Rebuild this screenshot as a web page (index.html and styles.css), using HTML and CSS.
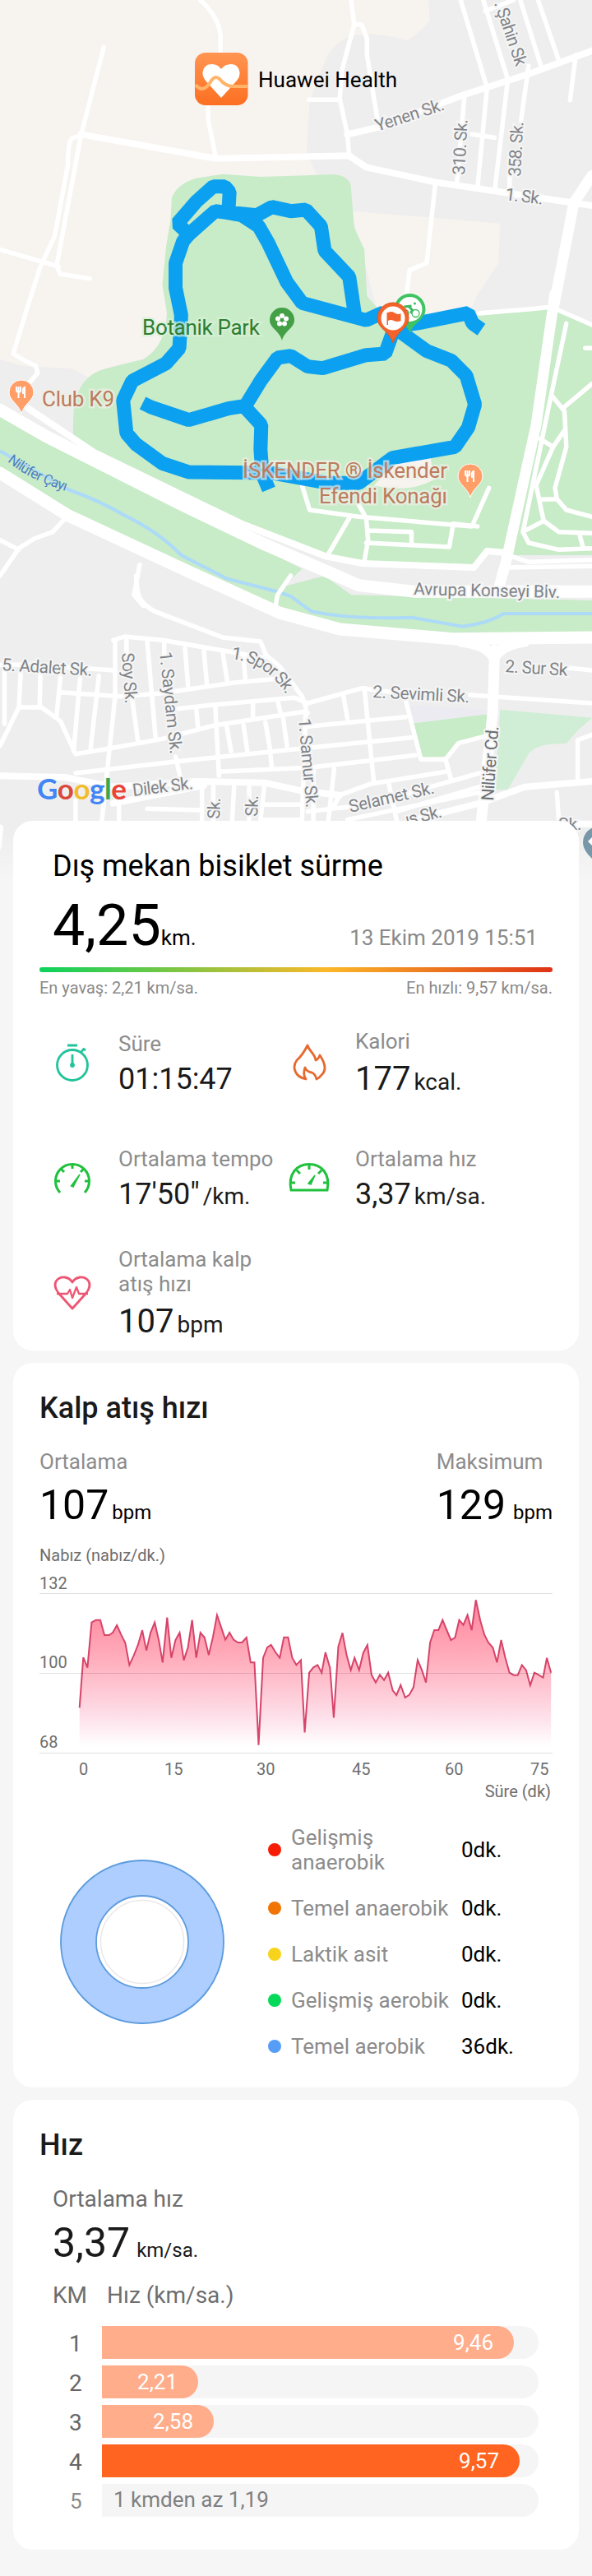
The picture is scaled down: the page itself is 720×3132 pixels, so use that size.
FILE: index.html
```html
<!DOCTYPE html>
<html lang="tr">
<head>
	<meta charset="UTF-8">
	<meta name="viewport" content="width=device-width, initial-scale=1.0">
	<title>Huawei Health</title>
	<link rel="stylesheet" href="styles.css">
</head>
<body>
	<!-- map -->
	<div class="map">
		<svg class="ground" viewBox="0 0 1568 3240" preserveAspectRatio="none">
			<path class="sand" d="M0 0H1135L1138 75Q1115 115 1080 148Q1000 115 930 130Q880 160 862 220L820 370L812 560L840 640L900 1000L440 1260L380 1310Q260 1340 240 1380L190 1345L60 1335L0 1310Z"/>
			<path class="sand" d="M930 770L1325 815L1320 960L1260 1085Q1255 1130 1220 1145L1000 1140Z"/>
			<path class="green" d="M590 635L690 645Q800 640 880 636Q930 640 930 690L938 830L965 910L972 1080L1010 1140L1270 1152L1465 1125L1568 1180V2025H1340L1290 2010L1255 2075L960 2050L865 2030L640 1910L250 1650L193 1595L195 1500Q205 1370 280 1345L380 1310Q440 1260 442 1140L430 1040L440 900L452 800L455 720Q470 670 520 650Z"/>
			<path class="green" d="M0 1500L480 1850L800 2075L750 2140L860 2100L930 2170L1568 2190V2305L1220 2320L900 2285L740 2220L500 2080L180 1880L0 1725Z"/>
			<path class="green" d="M1095 2638L1290 2605L1290 2690L1210 2705L1180 2760L1115 2762Z"/>
			<path class="green soft" d="M1325 2588L1568 2618L1530 2665L1500 2712Q1420 2710 1400 2750L1345 2880H1310Z"/>
			<path class="lilac" d="M1080 2570L1290 2590V2605L1095 2638Z"/>
			<path class="sand" d="M1050 1690L1140 1665L1150 1750Q1080 1800 990 1770Z"/>
			<path class="river" d="M0 1645L180 1785Q270 1830 330 1880Q420 1940 480 2025L600 2110L740 2160L770 2175L825 2230Q930 2260 1090 2252L1225 2285Q1290 2275 1335 2238L1568 2238"/>

			<!-- small streets -->
			<g class="street">
				<path d="M275 172L215 490L150 970L160 1000L238 1016M0 910L155 972M530 0Q580 60 584 130V190M550 380L552 440L572 578M220 490L190 505Q180 520 180 600L145 860L105 980L75 1110L35 1290L65 1315L95 1335L100 1360L75 1400"/>
				<path d="M930 0L938 90L905 260L900 360L920 490L925 568M938 90H958L972 140V200L1000 440M818 364H900M1220 0L1290 320L1265 680M1280 0L1345 290L1310 700M1378 0L1435 250M1425 0L1480 220M1400 240L1380 440M1525 200L1510 365M1285 40L1360 0M1230 350L1210 670M1250 490L1310 502M1350 700V640"/>
				<path d="M1153 670L1130 960L1085 985L1075 1100M1270 1142L1400 1128L1460 1120L1568 1185"/>
			</g>
			<g class="street mid">
				<path d="M215 490L570 578L925 568L970 610L1155 665L1568 750M920 490L1000 465L1230 345L1400 270L1568 185"/>
			</g>
			<!-- lanes inside the park -->
			<g class="street" transform="translate(0 1080)">
				<path d="M800 690L820 780L950 805L1250 840L1295 700M950 760L970 810L975 890L965 965M925 810L870 940M975 855L1090 860V900M970 900L1190 915L1200 835M1200 830L1265 840"/>
				<path d="M1500 100L1460 360L1385 860L1400 900L1480 925L1568 920M1460 360L1495 420L1500 550L1470 700L1475 740L1500 780L1568 805M1490 410L1568 320M1430 520L1465 550L1495 490M1465 550L1420 690L1440 820L1480 860L1568 865M1385 860L1440 820M1430 742L1475 740M1535 870L1545 920M1568 190H1550"/>
				<path d="M1335 940L1400 970L1568 962M1340 990L1568 985M180 800L140 860L90 885L50 920L0 1020M0 890L50 925M370 980L355 1090L380 1130"/>
				<path class="mid" d="M75 410L250 570L640 830L865 950L960 975L1255 990L1290 930L1335 935"/>
			</g>
			<g class="street wide">
				<path d="M0 1495L120 1590L480 1840L700 1985L950 2135L1100 2158H1568"/>
				<path d="M0 1725L180 1880L500 2085L740 2235L900 2295L1200 2330L1568 2325"/>
				<path class="avenue" d="M1470 1070L1420 1550L1340 2050L1320 2150M1310 2370L1305 2600L1275 2990M1220 2340Q1290 2350 1308 2400Q1330 2350 1390 2340M1568 640L1520 740L1465 1130"/>
			</g>
			<!-- streets of the south quarter -->
			<g class="street" transform="translate(0 2100)">
				<path d="M770 0L735 70L730 110M360 0L365 60Q370 100 410 130L590 225L690 240L705 290L740 330L800 440L810 480L800 890"/>
				<path d="M0 325L100 325L300 345M305 235L305 440L270 890M300 235L330 222L430 235L620 280L700 300M335 230V290M390 240L412 590M435 240V290M490 265L498 400M540 275L548 395M590 280L602 385M645 300L650 380M160 425L320 440L420 430L620 390L740 375M12 350V540M55 350L50 480M107 360L105 475M160 370L150 510M212 375L195 640M262 365L240 630M350 450L365 600M0 620L50 480H110L160 530L200 650L290 630L430 595L570 545L810 495L815 500M470 485L570 470L780 445L815 465L960 410L1040 425"/>
				<path d="M520 490L525 560M570 470L580 730M670 460V520M735 455L745 510M600 545L612 640M645 545L655 640M703 535L715 630L720 705M750 520L760 620M200 720L450 680L800 630L1090 590M580 715L820 700L1100 655M815 550L1075 515M910 440L920 520M965 410L990 750M1070 430L1115 670L1180 670L1215 610L1300 580M1180 670L1195 745M465 660L480 750M885 705L870 890M815 860L880 850L900 800L980 760L1180 715M1050 860L1270 770M870 850L960 840L1270 720M920 890L1270 790"/>
				<path d="M390 850L530 855M200 820V890M315 820V890M535 750V890M620 770L615 890M700 770L690 890M565 750V890M660 770V890M700 835H800M690 890H800M1030 760L1050 890M830 700L830 890M1245 435L1568 465M1500 335L1568 345M1568 580L1530 600V750M1475 790L1480 890"/>
				<path class="mid" d="M0 730L170 735L300 770L520 750L700 755L800 785L900 800M300 830L540 765M1100 890L1270 830L1390 770L1568 750M0 920L-5 990M1500 905L1568 905"/>
			</g>

			<!-- ride track -->
			<g class="track">
				<path d="M1275 1202L1252 1180L1240 1142L1110 1178L1045 1190L1015 1140L970 1168L800 1105L760 1030L710 885L685 825L640 785L600 775L570 770L500 855L470 815L520 735L565 680H595L608 700L605 775L680 785L720 755L770 770L810 765L850 825L860 915L925 1010L940 1150"/>
				<path d="M500 855L485 880L465 960V1050L480 1150L475 1270L440 1325L350 1390L326 1460L335 1580L360 1620L430 1690L500 1722L720 1725L870 1762H950L1040 1670L1205 1630L1240 1560L1258 1475L1235 1370L1195 1315L1130 1280L1070 1220L1045 1195L1020 1290L970 1295L855 1343L815 1337L770 1298L735 1305L690 1390L650 1480L605 1490L500 1532L400 1485L378 1470M645 1480L692 1550L690 1640L695 1730L712 1785"/>
			</g>
		</svg>

		<svg class="labels" viewBox="0 0 720 1080">
			<defs>
				<linearGradient id="brand" x1="0" y1="0" x2="0" y2="1">
					<stop offset="0" stop-color="#ff9551"/>
					<stop offset="1" stop-color="#fc6f22"/>
				</linearGradient>
				<path id="spor" d="M281 801Q325 806 349 846"/>
				<path id="cayi" d="M9 561Q35 583 80 597"/>
			</defs>
			<g class="label">
				<text transform="translate(459 160) rotate(-18)" textLength="87">Yenen Sk.</text>
				<text transform="translate(565 213) rotate(-87)" textLength="68">310. Sk.</text>
				<text transform="translate(633 215) rotate(-87)" textLength="67">358. Sk.</text>
				<text transform="translate(601 4) rotate(71)" textLength="82">. Şahin Sk</text>
				<text transform="translate(614 243) rotate(7)" textLength="46">1. Sk.</text>
				<text transform="translate(503 723) rotate(1.3)" textLength="178">Avrupa Konseyi Blv.</text>
				<text transform="translate(2 815) rotate(3.5)" textLength="110">5. Adalet Sk.</text>
				<text transform="translate(148 794) rotate(86)" textLength="62">Soy Sk.</text>
				<text transform="translate(194 793) rotate(84)" textLength="125">1. Saydam Sk.</text>
				<text><textPath href="#spor" textLength="83">1. Spor Sk.</textPath></text>
				<text transform="translate(363 874) rotate(85)" textLength="109">1. Samur Sk.</text>
				<text transform="translate(614 817) rotate(3.5)" textLength="76">2. Sur Sk</text>
				<text transform="translate(453 848) rotate(3)" textLength="118">2. Sevimli Sk.</text>
				<text transform="translate(600 974) rotate(-86)" textLength="91" class="dark">Nilüfer Cd.</text>
				<text transform="translate(162 968) rotate(-7)" textLength="74">Dilek Sk.</text>
				<text transform="translate(426 988) rotate(-13)" textLength="106">Selamet Sk.</text>
				<text transform="translate(267 996) rotate(-88)" textLength="26">Sk.</text>
				<text transform="translate(313 993) rotate(-88)" textLength="26">Sk.</text>
				<text transform="translate(495 1004) rotate(-14)" textLength="45">ış Sk.</text>
				<text x="679" y="1009">Sk.</text>
				<text class="water"><textPath href="#cayi" textLength="80">Nilüfer Çayı</textPath></text>
			</g>
			<g class="place">
				<text class="park" x="173" y="407" textLength="143">Botanik Park</text>
				<text x="51" y="494" textLength="88">Club K9</text>
				<text x="295" y="581" textLength="249">İSKENDER ® İskender</text>
				<text x="388" y="612" textLength="156">Efendi Konağı</text>
			</g>

			<!-- pins -->
			<g transform="translate(343 389)">
				<path fill="#43a047" d="M0 25C-3 13-15 10-15 0A15 15 0 0 1 15 0C15 10 3 13 0 25Z"/>
				<g fill="#fff"><circle cy="-5" r="3"/><circle cx="5" cy="-1.500" r="3"/><circle cx="3" cy="4.500" r="3"/><circle cx="-3" cy="4.500" r="3"/><circle cx="-5" cy="-1.500" r="3"/></g>
				<circle r="1.600" fill="#43a047"/>
			</g>
			<g id="food" transform="translate(26 477)">
				<path fill="#ff9e67" stroke="#fff" d="M0 26C-3 14-15 10-15 0A15 15 0 0 1 15 0C15 10 3 14 0 26Z"/>
				<path fill="none" stroke="#fff" stroke-width="2" d="M-6-7V-3Q-6 0-3.500 0T-1-3V-7M-3.500-7V7M4 7V-6Q1-5 2 1H4"/>
			</g>
			<use href="#food" x="546" y="102"/>
			<g transform="translate(498.500 377)">
				<path fill="#3fc463" d="M0 28C-4 15-19 12-19-1A19 19 0 0 1 19-1C19 12 4 15 0 28Z"/>
				<circle cy="-1" r="15" fill="#fff"/>
				<g fill="none" stroke="#3dba5f" stroke-width="1.300">
					<circle cx="-6" cy="4" r="4.500"/>
					<circle cx="7" cy="4" r="4.500"/>
					<path d="M-7-4L2-5M-2-5L3 0L1 4" stroke-width="3"/>
				</g>
				<circle cx="6" cy="-8" r="1.500" fill="#3dba5f"/>
			</g>
			<g transform="translate(478 387)">
				<path fill="#f4632b" stroke="#e0561f" d="M0 30C-4 16-19 12-19 0A19 19 0 0 1 19 0C19 12 4 16 0 30Z"/>
				<circle r="14.500" fill="#fff"/>
				<path fill="#f4632b" d="M-7.500-7H-6V8H-7.500ZM-6-7Q-2-9 2-6.500T9.500-6V3Q5 5 1 3T-6 3Z"/>
			</g>
			<path fill="#7897a9" d="M728 1056C724 1044 709 1038 709 1024A19 19 0 0 1 747 1024Z"/>
			<path fill="#fff" d="M715 1023L720 1018V1028Z"/>

			<!-- app badge -->
			<rect x="237" y="64" width="64.500" height="64" rx="13" fill="url(#brand)"/>
			<path fill="#fff" d="M269 119L250 98Q245 91 247 86Q249 78 258 78Q265 78 269 84Q273 78 281 78Q289 78 291 86Q293 92 288 98Z"/>
			<path fill="none" stroke="#ffb469" stroke-width="4" d="M238 103Q243 110 249 107Q253 105 257 98Q262 91 267 96Q274 105 284 105H301"/>
			<text class="app" x="314" y="106" textLength="169">Huawei Health</text>
			<text class="google" x="45" y="972" textLength="109"><tspan fill="#4285f4">G</tspan><tspan fill="#d94a3d">o</tspan><tspan fill="#f2bd2c">o</tspan><tspan fill="#4285f4">g</tspan><tspan fill="#34a853">l</tspan><tspan fill="#ea4335">e</tspan></text>
		</svg>
	</div>

	<!-- summary -->
	<div class="card summary">
		<h1>Dış mekan bisiklet sürme</h1>
		<div class="distance">
			<p><b>4,25</b>km.</p>
			<span>13 Ekim 2019 15:51</span>
		</div>
		<div class="pace-bar"></div>
		<div class="pace-text">
			<span>En yavaş: 2,21 km/sa.</span>
			<span>En hızlı: 9,57 km/sa.</span>
		</div>
		<ul class="stats">
			<li>
				<svg viewBox="0 0 48 48" fill="none" stroke="#20c39a" stroke-width="2.800">
					<circle cx="24" cy="26" r="18.500"/>
					<path d="M18 2H30M34 11L38 6M37 6L40 8M24 13V26"/>
					<circle cx="24" cy="26" r="1.500"/>
				</svg>
				<div><span>Süre</span><p>01:15:47</p></div>
			</li>
			<li>
				<svg viewBox="0 0 48 48" fill="none" stroke="#e6692f" stroke-width="2.800" stroke-linejoin="round">
					<path d="M22 2C24 9 31 12 32 20Q35 19 37 14C43 23 46 32 39 38Q37 41 33 43Q31 36 27 35Q21 34 19 29Q16 38 20 43C6 40 3 28 9 20Q16 14 22 2Z"/>
				</svg>
				<div><span>Kalori</span><p class="big">177<small>kcal.</small></p></div>
			</li>
			<li>
				<svg viewBox="0 0 48 48" fill="none" stroke="#1fc13d" stroke-width="3">
					<path d="M9 41A20.500 20.500 0 1 1 39 41M24 6V12M10.500 12.500L14 16M37.500 12.500L34 16M3 27H9M39 27H45"/>
					<path d="M33 19L25 34L22.500 33Z" fill="#1fc13d" stroke-width="1.500"/>
				</svg>
				<div><span>Ortalama tempo</span><p>17'50"<small>/km.</small></p></div>
			</li>
			<li>
				<svg viewBox="0 0 48 48" fill="none" stroke="#1fc13d" stroke-width="3">
					<path d="M2 38C-2 18 9 6.500 24 6.500S50 18 46 38ZM24 7V13M9 14L13 18M39 14L35 18M1 29H7M41 29H47"/>
					<path d="M31 20L26 31L23 30Z" fill="#1fc13d" stroke-width="1.500"/>
				</svg>
				<div><span>Ortalama hız</span><p>3,37<small>km/sa.</small></p></div>
			</li>
			<li>
				<svg viewBox="0 0 48 48" fill="none" stroke="#ee5573" stroke-width="2.800" stroke-linejoin="round">
					<path d="M24 42L7 23Q1 15 4 9Q8 3 15 4Q21 5 24 10Q27 5 33 4Q40 3 44 9Q47 15 41 23Z"/>
					<path d="M5 24H18L21 19L24 29L29 16L32 24H43" stroke-width="2.300"/>
				</svg>
				<div><span>Ortalama kalp<br>atış hızı</span><p class="big">107<small>bpm</small></p></div>
			</li>
		</ul>
	</div>

	<!-- heart rate -->
	<div class="card heart">
		<h2>Kalp atış hızı</h2>
		<div class="rates">
			<div><span>Ortalama</span><p>107<small>bpm</small></p></div>
			<div><span>Maksimum</span><p>129<small class="far">bpm</small></p></div>
		</div>
		<p class="axis-title">Nabız (nabız/dk.)</p>
		<div class="chart">
			<svg viewBox="105 52 1358 582" preserveAspectRatio="none">
				<defs>
					<linearGradient id="pulse" gradientUnits="userSpaceOnUse" x1="0" y1="76" x2="0" y2="610">
						<stop offset="0" stop-color="#ff8299"/>
						<stop offset=".45" stop-color="#ffb3c1"/>
						<stop offset=".8" stop-color="#fde0ea"/>
						<stop offset="1" stop-color="#fff"/>
					</linearGradient>
				</defs>
				<path id="area" fill="url(#pulse)"/>
				<path id="line"/>
			</svg>
			<div class="tick first">132</div>
			<div class="tick">100</div>
			<div class="tick">68</div>
		</div>
		<div class="minutes"><span>0</span><span>15</span><span>30</span><span>45</span><span>60</span><span>75</span></div>
		<p class="axis-end">Süre (dk)</p>
		<div class="zones">
			<svg viewBox="0 0 204 204">
				<circle cx="102" cy="102" r="78" fill="none" stroke="#adceff" stroke-width="43"/>
				<circle cx="102" cy="102" r="99" fill="none" stroke="#5c9bdd" stroke-width="1.800"/>
				<circle cx="102" cy="102" r="56" fill="#fff" stroke="#5c9bdd" stroke-width="1.800"/>
				<circle cx="102" cy="102" r="50.500" fill="none" stroke="#ece8e8" stroke-width="1.600"/>
			</svg>
			<ul>
				<li><i class="red"></i><span>Gelişmiş<br>anaerobik</span><b>0dk.</b></li>
				<li><i class="orange"></i><span>Temel anaerobik</span><b>0dk.</b></li>
				<li><i class="yellow"></i><span>Laktik asit</span><b>0dk.</b></li>
				<li><i class="lime"></i><span>Gelişmiş aerobik</span><b>0dk.</b></li>
				<li><i class="blue"></i><span>Temel aerobik</span><b>36dk.</b></li>
			</ul>
		</div>
	</div>

	<!-- speed -->
	<div class="card speed">
		<h2>Hız</h2>
		<div class="average">
			<span>Ortalama hız</span>
			<p>3,37<small>km/sa.</small></p>
		</div>
		<div class="head"><span>KM</span><span>Hız (km/sa.)</span></div>
		<ul class="laps">
			<li><span>1</span><div class="lap"><div style="width: 501px">9,46</div></div></li>
			<li><span>2</span><div class="lap"><div style="width: 117px">2,21</div></div></li>
			<li><span>3</span><div class="lap"><div style="width: 136px">2,58</div></div></li>
			<li><span>4</span><div class="lap"><div class="best" style="width: 508px">9,57</div></div></li>
			<li class="rest"><span>5</span><div class="lap">1 kmden az 1,19</div></li>
		</ul>
	</div>

	<script type="text/javascript">
	// pulse curve, x y pairs
	var points = '211,470 221,286 232,324 243,159 254,150 266,150 277,205 289,205 299,196 310,169 321,203 332,233 343,314 355,278 366,240 377,187 388,261 399,196 410,159 421,225 431,305 443,141 454,288 465,223 476,196 487,297 498,250 509,150 520,288 531,196 542,214 553,278 564,213 575,132 586,177 597,222 608,196 619,222 630,232 641,232 653,214 664,305 674,305 685,606 697,288 708,250 718,241 730,268 741,288 752,213 763,213 774,288 785,314 797,296 807,560 819,342 830,323 841,314 852,342 862,268 874,325 884,506 896,247 907,197 918,278 929,333 939,288 951,333 962,270 973,241 984,350 995,378 1006,350 1017,369 1028,342 1040,407 1050,424 1061,387 1073,433 1084,423 1095,395 1106,296 1117,332 1128,378 1139,232 1150,187 1161,187 1172,150 1183,187 1194,223 1205,214 1216,150 1227,168 1238,132 1249,187 1260,77 1272,153 1283,205 1293,232 1305,251 1316,305 1327,223 1338,288 1349,342 1360,351 1371,351 1382,314 1393,333 1404,388 1415,342 1427,351 1438,360 1448,288 1459,342';

	document.getElementById('line').setAttribute('d', 'M' + points);
	document.getElementById('area').setAttribute('d', 'M211,620 ' + points + ' 1459,620Z');
	</script>
</body>
</html>
```

FILE: styles.css
```css
* {
	margin: 0;
	padding: 0;
	box-sizing: border-box;
}
body {
	width: 720px;
	height: 3132px;
	background-color: #f6f6f6;
	font-family: Roboto, "Noto Sans", sans-serif;
	color: #000;
	overflow: hidden;
}
ul {
	list-style-type: none;
}
b {
	font-weight: 400;
}
small {
	line-height: 1;
}

/* map */
.map {
	position: relative;
	height: 998px;
}
.map svg {
	position: absolute;
	top: 0;
	left: 0;
	width: 720px;
	height: 1080px;
}
.ground {
	background-color: #eee;
	-webkit-mask-image: linear-gradient(#000 94%, transparent 99%);
	mask-image: linear-gradient(#000 94%, transparent 99%);
}
.sand {
	fill: #f7f3ef;
}
.green {
	fill: #c8ebc8;
}
.soft {
	fill: #d0eed5;
}
.lilac {
	fill: #ebebf1;
}
.river {
	fill: none;
	stroke: #acdaf8;
	stroke-width: 4px;
	vector-effect: non-scaling-stroke;
}
.street path {
	fill: none;
	stroke: #fff;
	stroke-width: 5.5px;
	stroke-linejoin: round;
	stroke-linecap: round;
	vector-effect: non-scaling-stroke;
}
.mid path, .street .mid {
	stroke-width: 8px;
}
.wide path {
	stroke-width: 15px;
}
.wide .avenue {
	stroke-width: 13px;
}
.track path {
	fill: none;
	stroke: #0ba0f0;
	stroke-width: 17px;
	stroke-linejoin: bevel;
	vector-effect: non-scaling-stroke;
}
.label text {
	font-size: 21px;
	fill: #808387;
	stroke: #f5f5f5;
	stroke-width: 4px;
	paint-order: stroke;
}
.label .dark {
	fill: #6c6f73;
}
.label .water {
	font-size: 17px;
	fill: #4d7fc4;
	stroke: #c8ebc8;
	stroke-width: 1px;
}
.place text {
	font-size: 26px;
	fill: #bd7a5c;
	stroke: rgba(240, 240, 232, 0.65);
	stroke-width: 5px;
	paint-order: stroke;
}
.place .park {
	fill: #2f7d32;
	stroke: rgba(215, 242, 215, 0.7);
}
.app {
	font-size: 26px;
}
.google {
	font-family: Lato, Roboto, sans-serif;
	font-size: 35px;
	font-weight: 700;
	stroke: #f4f4f4;
	stroke-width: 2px;
	paint-order: stroke;
}

/* cards */
.card {
	position: relative;
	width: 688px;
	margin: 0 auto 15px;
	padding-top: 34px;
	border-radius: 24px;
	background-color: #fff;
}
h1, h2 {
	font-size: 36px;
	line-height: 42px;
	font-weight: 400;
}
h2 {
	padding-left: 32px;
	font-weight: 500;
	color: #1a1a1a;
}

/* summary */
.summary {
	height: 644px;
}
.summary h1 {
	padding-left: 48px;
}
.distance {
	display: flex;
	justify-content: space-between;
	align-items: baseline;
	height: 80px;
	margin: 11px 50px 0 48px;
	line-height: 80px;
	font-size: 26px;
}
.distance b {
	font-size: 70px;
}
.distance span {
	color: #8a8a8a;
}
.pace-bar {
	height: 6px;
	margin: 11px 32px 0;
	border-radius: 3px;
	background-image: linear-gradient(90deg, #0bd25c, #fbb829 56%, #de3216);
}
.pace-text {
	display: flex;
	justify-content: space-between;
	margin: 7px 32px 10px;
	font-size: 20px;
	line-height: 24px;
	color: #8a8a8a;
}
.stats {
	display: grid;
	grid-template-columns: 288px 288px;
	grid-auto-rows: 140px;
	padding-left: 48px;
}
.stats li {
	display: flex;
	align-items: center;
	white-space: nowrap;
}
.stats svg {
	flex: none;
	width: 48px;
	height: 48px;
	margin-right: 32px;
	overflow: visible;
}
.stats span {
	display: block;
	margin-bottom: 7px;
	font-size: 26px;
	line-height: 30px;
	color: #8c8c8c;
}
.stats p {
	font-size: 36px;
	line-height: 42px;
	color: #1a1a1a;
}
.stats .big {
	font-size: 40px;
	line-height: 47px;
}
.stats small {
	margin-left: 4px;
	font-size: 28px;
}

/* heart rate */
.heart {
	height: 881px;
}
.rates {
	display: flex;
	justify-content: space-between;
	margin: 29px 32px 20px;
}
.rates span {
	display: block;
	margin-bottom: 9px;
	font-size: 26px;
	line-height: 30px;
	color: #8c8c8c;
}
.rates p, .average p {
	font-size: 50px;
	line-height: 58px;
}
.rates small {
	margin-left: 4px;
	font-size: 24px;
}
.rates .far {
	margin-left: 9px;
}
.axis-title, .chart, .minutes, .axis-end {
	margin: 0 32px;
	font-size: 20px;
	line-height: 24px;
	color: #6e6e6e;
}
.axis-title {
	margin-bottom: 10px;
}
.chart {
	position: relative;
}
.chart svg {
	position: absolute;
	top: 24px;
	left: 0;
	width: 624px;
	height: 194px;
}
#line {
	fill: none;
	stroke: #d6446a;
	stroke-width: 2px;
	vector-effect: non-scaling-stroke;
}
.tick {
	position: relative;
	display: flex;
	align-items: flex-end;
	height: 97px;
	padding-bottom: 1px;
	border-bottom: 1px solid rgba(0, 0, 0, 0.12);
}
.first {
	height: 25px;
	padding: 0;
}
.minutes {
	display: grid;
	grid-template-columns: 104px 112px 116px 113px 104px auto;
	padding: 7px 0 3px 48px;
}
.axis-end {
	padding-right: 2px;
	text-align: right;
}
.zones {
	display: flex;
	align-items: center;
	margin-top: 16px;
	padding-left: 55px;
	font-size: 26px;
	line-height: 30px;
}
.zones svg {
	flex: none;
	width: 204px;
	height: 204px;
	margin-right: 51px;
}
.zones li {
	display: grid;
	grid-template-columns: 28px 207px auto;
	align-items: center;
	padding: 13px 0;
}
.zones i {
	width: 16px;
	height: 16px;
	border-radius: 50%;
}
.zones span {
	color: #8c8c8c;
}
.red {
	background-color: #f71c05;
}
.orange {
	background-color: #f17505;
}
.yellow {
	background-color: #f8d31b;
}
.lime {
	background-color: #05d95a;
}
.blue {
	background-color: #559df6;
}

/* speed */
.speed {
	height: 547px;
}
.average {
	margin: 28px 48px 18px;
	color: #1a1a1a;
}
.average span {
	display: block;
	margin-bottom: 8px;
	font-size: 28px;
	line-height: 33px;
	color: #6e6e6e;
}
.average small {
	margin-left: 8px;
	font-size: 24px;
}
.head {
	display: flex;
	gap: 24px;
	margin: 0 0 21px 48px;
	font-size: 28px;
	line-height: 33px;
	color: #6e6e6e;
}
.laps li {
	display: flex;
	height: 40px;
	margin-bottom: 8px;
	padding-left: 68px;
	font-size: 26px;
	line-height: 41px;
}
.laps span {
	width: 40px;
	font-size: 28px;
	line-height: 43px;
	color: #666;
}
.lap {
	width: 531px;
	height: 40px;
	border-radius: 0 20px 20px 0;
	background-color: #f6f5f6;
}
.lap div {
	height: 40px;
	padding-right: 25px;
	border-radius: 0 20px 20px 0;
	background-color: #ffad8b;
	color: #fff;
	text-align: right;
}
.lap .best {
	background-color: #ff6521;
}
.rest .lap {
	padding-left: 14px;
	line-height: 38px;
	color: #808080;
}
.rest span {
	padding-left: 1px;
	font-size: 26px;
	color: #8a8a8a;
}
```
